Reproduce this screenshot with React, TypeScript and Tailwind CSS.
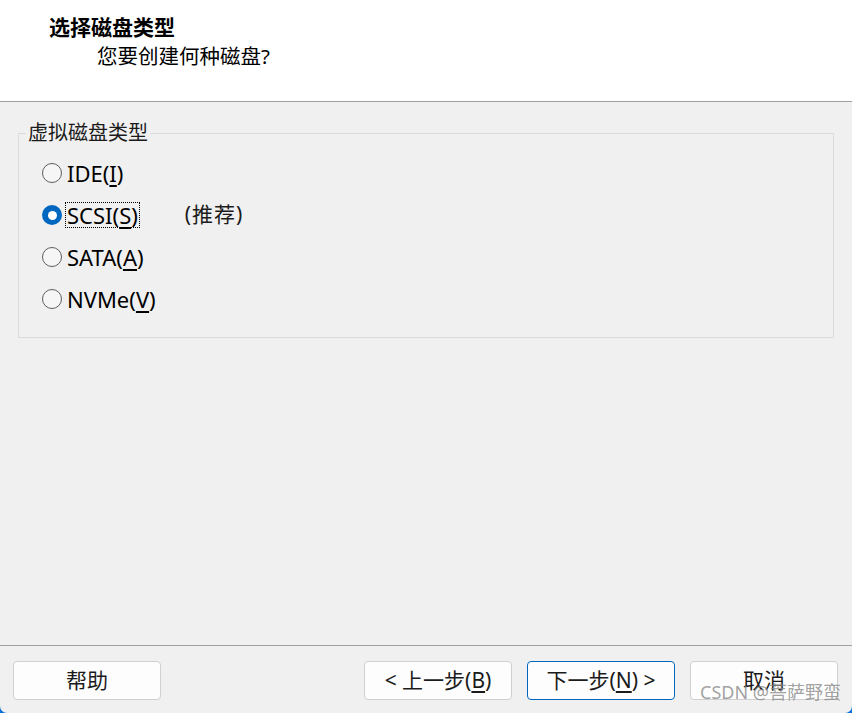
import React from "react";

const font = { fontFamily: '"Noto Sans", "Noto Sans CJK SC", sans-serif' };

type Opt = { label: string; key: string; after: string; checked?: boolean; note?: string };

const options: Opt[] = [
  { label: "IDE(", key: "I", after: ")" },
  { label: "SCSI(", key: "S", after: ")", checked: true, note: "(推荐)" },
  { label: "SATA(", key: "A", after: ")" },
  { label: "NVMe(", key: "V", after: ")" },
];

const Radio = ({ checked }: { checked?: boolean }) =>
  checked ? (
    <span className="w-[20px] h-[20px] rounded-full bg-[#0067c0] flex items-center justify-center shrink-0">
      <span className="w-[9px] h-[9px] rounded-full bg-white" />
    </span>
  ) : (
    <span className="w-[20px] h-[20px] rounded-full border border-[#5e5e5e] bg-[#f6f6f6] shrink-0" />
  );

const Btn = ({ children, primary }: { children: React.ReactNode; primary?: boolean }) => (
  <button
    className={
      "w-[148px] h-[39px] rounded-[4px] bg-[#fdfdfd] text-[21px] text-[#1b1b1b] flex items-center justify-center " +
      (primary ? "border border-[#0067c0]" : "border border-[#d0d0d0]")
    }
  >
    {children}
  </button>
);

export default function App() {
  return (
    <div className="relative w-[852px] h-[713px] flex flex-col bg-[#f0f0f0] overflow-hidden text-black" style={font}>
      <div className="h-[102px] shrink-0 bg-white border-b border-[#a0a0a0]">
        <div className="pt-[13px] pl-[49px] text-[21px] leading-[28px] font-bold">选择磁盘类型</div>
        <div className="mt-[1px] pl-[97px] text-[20.5px] leading-[28px]">您要创建何种磁盘?</div>
      </div>

      <div className="flex-1">
        <fieldset className="mt-[19px] ml-[18px] w-[816px] border border-[#dcdcdc] pl-[7px] pt-[7px] pb-[17px]">
          <legend className="px-[2px] text-[20px] leading-[24px] text-[#1b1b1b]">虚拟磁盘类型</legend>
          {options.map((o) => (
            <div key={o.label} className="h-[42px] ml-[16px] flex items-center gap-[4px]">
              <Radio checked={o.checked} />
              <span
                className={
                  "px-[1px] text-[22px] leading-[24px] " +
                  (o.checked ? "outline outline-1 outline-dotted outline-black" : "")
                }
              >
                {o.label}
                <span className="underline underline-offset-[3px]">{o.key}</span>
                {o.after}
              </span>
              {o.note && (
                <span className="ml-[42px] text-[21px] tracking-[1px] text-[#1b1b1b]">{o.note}</span>
              )}
            </div>
          ))}
        </fieldset>
      </div>

      <div className="h-[68px] shrink-0 border-t border-[#a0a0a0] flex items-start pt-[15px] pl-[13px]">
        <Btn>帮助</Btn>
        <div className="ml-auto mr-[14px] flex gap-[15px]">
          <Btn>
            &lt;&nbsp;上一步(<span className="underline underline-offset-[3px]">B</span>)
          </Btn>
          <Btn primary>
            下一步(<span className="underline underline-offset-[3px]">N</span>)&nbsp;&gt;
          </Btn>
          <Btn>取消</Btn>
        </div>
      </div>

      <div className="absolute left-[700px] top-[680px] text-[18px] leading-[24px] text-[#8a8a8a]/80 whitespace-nowrap">
        CSDN @菩萨野蛮
      </div>
      <div className="absolute -left-[3px] -bottom-[3px] w-[14px] h-[14px] rounded-bl-[10px] border-l-[3px] border-b-[3px] border-[#0a6fd6]" />
      <div className="absolute -right-[3px] -bottom-[3px] w-[14px] h-[14px] rounded-br-[10px] border-r-[3px] border-b-[3px] border-[#0a6fd6]" />
    </div>
  );
}
